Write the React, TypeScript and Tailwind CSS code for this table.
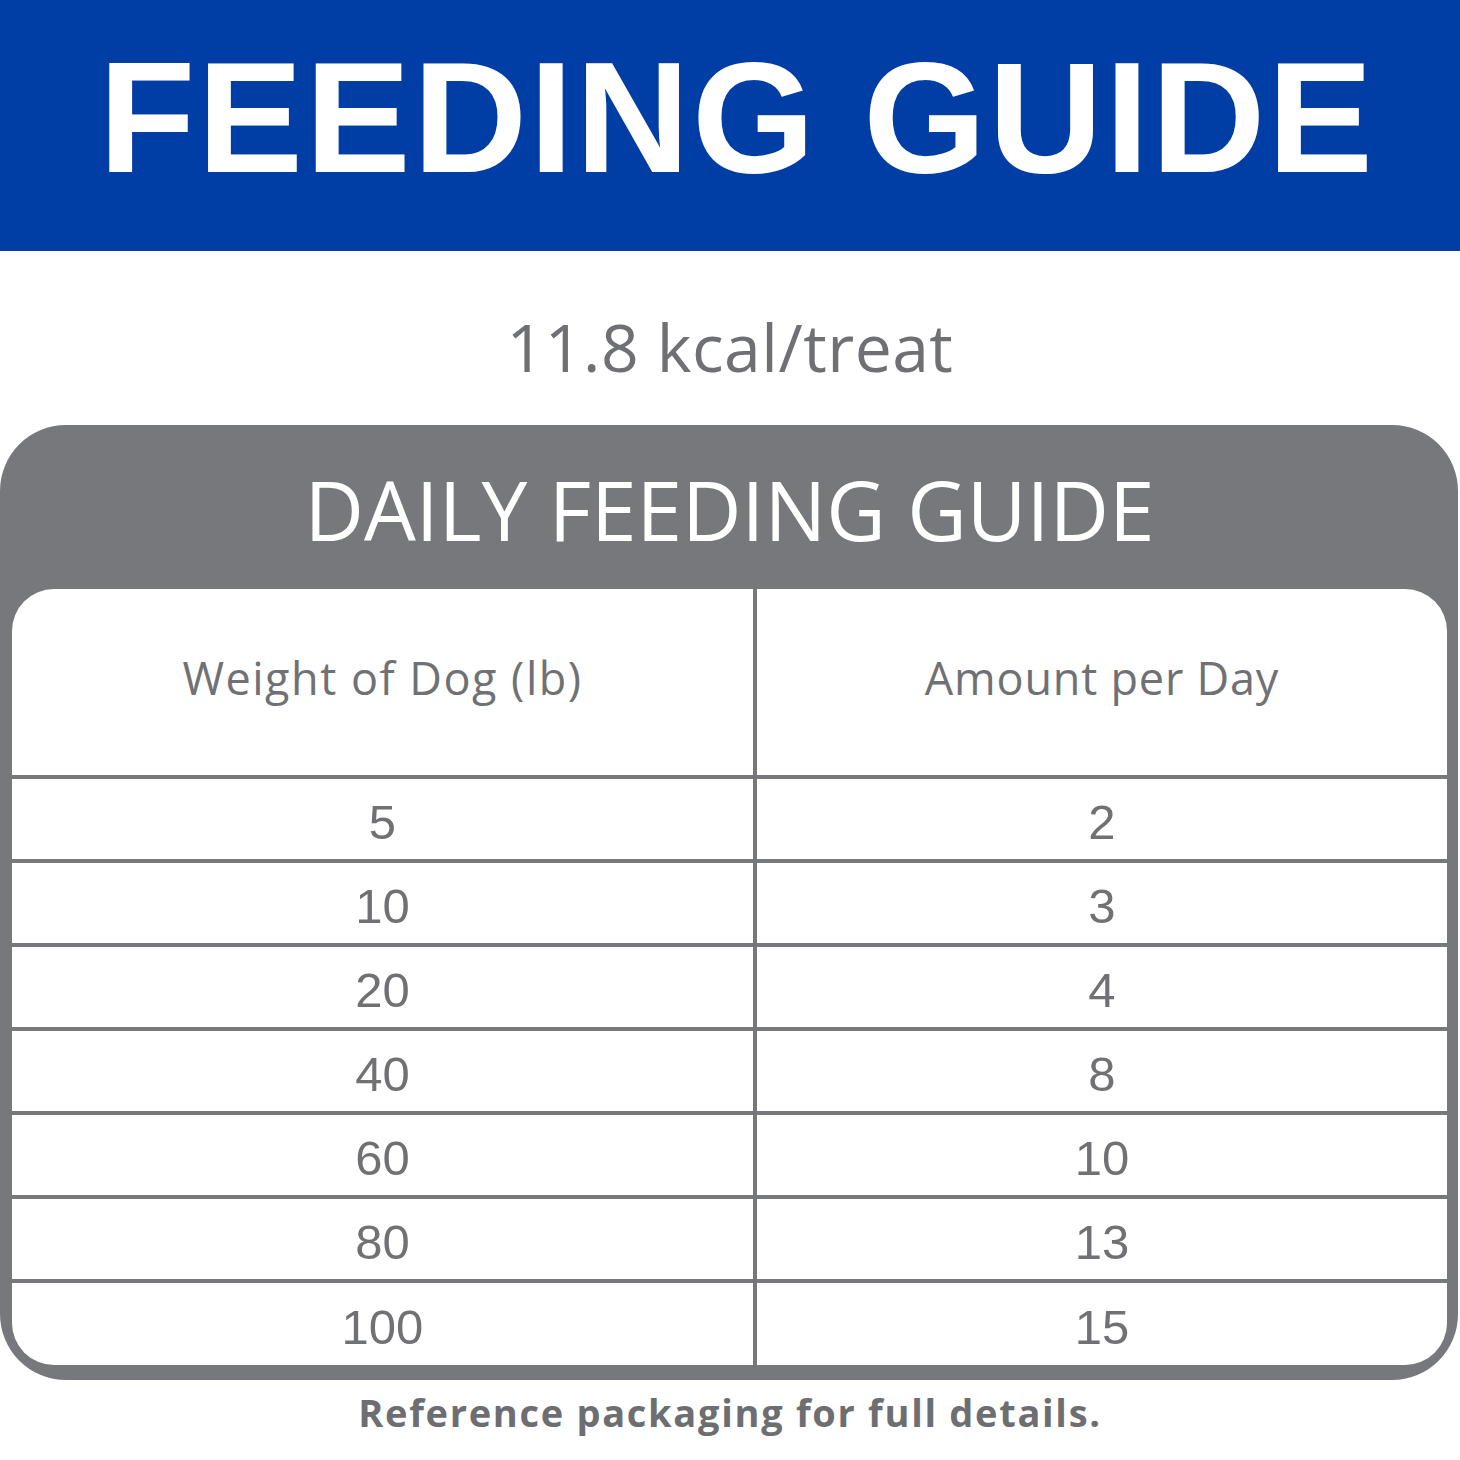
const rows: [string, string][] = [
  ["5", "2"],
  ["10", "3"],
  ["20", "4"],
  ["40", "8"],
  ["60", "10"],
  ["80", "13"],
  ["100", "15"],
];

const sans = "font-['Open_Sans','Liberation_Sans',sans-serif]";
const arial = "font-['Liberation_Sans',Arial,sans-serif]";

export default function App() {
  return (
    <div className="w-[1460px] h-[1460px] bg-white overflow-hidden">
      {/* top banner */}
      <div className="h-[251px] bg-[#003ea6] flex justify-center pt-[38px]">
        <h1 className={`${arial} font-bold text-white text-[158px] leading-none tracking-[2.3px] pl-[14px]`}>
          FEEDING GUIDE
        </h1>
      </div>

      <div className="flex justify-center pt-[62px] pb-[46px]">
        <p className={`${sans} text-[66px] leading-none text-[#6f7073] tracking-[0.5px] h-[66px]`}>
          11.8 kcal/treat
        </p>
      </div>

      {/* table card */}
      <div className="w-[1458px] rounded-[66px] bg-[#77787b] pl-[12px] pr-[11px] pb-[15px]">
        <div className="h-[164px] flex justify-center pt-[43px]">
          <h2 className={`${sans} text-white text-[82px] leading-none h-[82px]`}>DAILY FEEDING GUIDE</h2>
        </div>
        <div className="bg-white rounded-[42px] overflow-hidden">
          <div className="grid grid-cols-[745px_1fr] h-[186px]">
            <div className="border-r-4 border-[#77787b] flex justify-center pt-[66px]">
              <span className={`${sans} text-[45px] leading-none text-[#707174] tracking-[1.5px]`}>Weight of Dog (lb)</span>
            </div>
            <div className="flex justify-center pt-[66px]">
              <span className={`${sans} text-[45px] leading-none text-[#707174] tracking-[0.8px]`}>Amount per Day</span>
            </div>
          </div>
          {rows.map(([w, a], i) => (
            <div
              key={w}
              className={`grid grid-cols-[745px_1fr] border-t-4 border-[#77787b] ${i === rows.length - 1 ? "h-[86px]" : "h-[84px]"}`}
            >
              <div className="border-r-4 border-[#77787b] flex items-center justify-center pt-[6px]">
                <span className={`${arial} text-[49px] leading-none text-[#707174]`}>{w}</span>
              </div>
              <div className="flex items-center justify-center pt-[6px]">
                <span className={`${arial} text-[49px] leading-none text-[#707174]`}>{a}</span>
              </div>
            </div>
          ))}
        </div>
      </div>

      <div className="flex justify-center pt-[13px]">
        <p className={`${sans} font-bold text-[38px] leading-none text-[#6d6e71] tracking-[1.7px]`}>Reference packaging for full details.</p>
      </div>
    </div>
  );
}
